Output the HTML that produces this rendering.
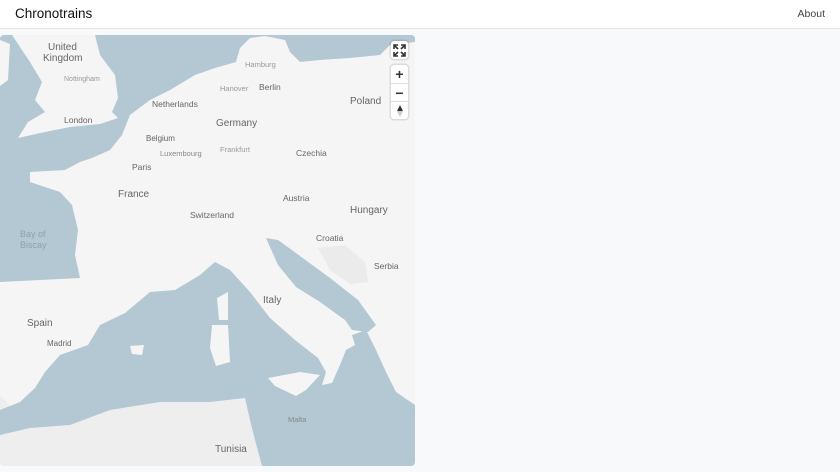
<!DOCTYPE html>
<html><head><meta charset="utf-8"><style>
*{margin:0;padding:0;box-sizing:border-box}
body{width:840px;height:472px;background:#f8f9fa;font-family:"Liberation Sans",sans-serif;overflow:hidden;position:relative}
.hdr{position:absolute;left:0;top:0;width:840px;height:29px;background:#fff;border-bottom:1px solid #e4e6e8}
.brand{position:absolute;left:15px;top:6px;font-size:13.5px;color:#111}
.about{position:absolute;right:15px;top:8px;font-size:10.5px;color:#444}
.map{position:absolute;left:0;top:35px;width:415px;height:431px;border-radius:4px;overflow:hidden;background:#f6f6f6}
.ctl{position:absolute;background:#fff;border-radius:3px;box-shadow:0 0 0 1.5px rgba(0,0,0,.1)}
.btn{width:17px;height:18px;display:flex;align-items:center;justify-content:center;font-size:14px;font-weight:bold;color:#333}
</style></head><body>
<div class="hdr"><div class="brand">Chronotrains</div><div class="about">About</div></div>
<div class="map">
<svg width="415" height="431" viewBox="0 35 415 431" style="position:absolute;left:0;top:0" font-family="Liberation Sans, sans-serif">
<rect x="0" y="35" width="415" height="431" fill="#f5f5f5"/>
<polygon points="318,248 345,245 365,262 368,282 350,284 330,270" fill="#ebebeb"/>
<polygon points="0,395 0,466 262,466 255,440 250,420 245,398 210,402 160,402 110,410 70,425 30,428" fill="#eeeeee"/>
<g fill="#b3c8d2">
<polygon points="0,35 415,35 415,42 390,45 380,55 350,58 320,60 300,62 290,52 285,40 265,36 250,38 240,48 236,62 215,68 195,75 170,90 150,100 130,115 122,135 110,150 92,158 80,162 65,170 30,172 30,182 60,192 72,205 78,230 75,255 80,278 40,280 0,282"/>
<polygon points="0,410 20,402 35,388 45,372 60,355 88,345 100,325 125,313 150,292 175,290 200,275 215,262 230,270 250,292 270,318 295,340 318,358 326,372 322,385 332,383 340,365 346,350 355,345 352,335 366,330 376,350 386,372 396,392 415,405 415,466 262,466 255,440 250,420 245,398 210,402 160,402 110,410 70,425 30,428 0,435"/>
<polygon points="266,238 278,240 300,256 330,278 358,300 376,325 368,332 352,330 345,320 320,302 296,287 278,265"/>
</g>
<g fill="#f5f5f5">
<polygon points="12,35 95,35 100,55 115,75 118,98 112,112 118,118 100,124 70,127 45,132 18,138 28,122 45,112 35,100 42,82 30,62"/>
<polygon points="0,40 10,44 8,80 0,86"/>
<polygon points="268,378 300,372 320,375 306,390 296,396 275,386"/>
<polygon points="212,325 228,325 230,362 216,366 210,348"/>
<polygon points="217,298 228,292 228,320 219,320"/>
<polygon points="130,346 144,345 142,355 132,354"/>
</g>
<g fill="#666" font-size="8">
<text x="48" y="50" font-size="10">United</text><text x="43" y="61" font-size="10">Kingdom</text>
<text x="64" y="81" fill="#999" font-size="7">Nottingham</text>
<text x="64" y="123" font-size="8.5">London</text>
<text x="152" y="107" font-size="8.5">Netherlands</text>
<text x="245" y="67" fill="#999" font-size="7.5">Hamburg</text>
<text x="259" y="90" font-size="8.5">Berlin</text>
<text x="220" y="91" fill="#999" font-size="7.5">Hanover</text>
<text x="216" y="126" font-size="10">Germany</text>
<text x="350" y="104" font-size="10">Poland</text>
<text x="146" y="141" font-size="8">Belgium</text>
<text x="160" y="156" fill="#888" font-size="7.5">Luxembourg</text>
<text x="220" y="152" fill="#999" font-size="7.5">Frankfurt</text>
<text x="296" y="156" font-size="8.5">Czechia</text>
<text x="132" y="170" font-size="8.5">Paris</text>
<text x="118" y="197" font-size="10">France</text>
<text x="283" y="201" font-size="8.5">Austria</text>
<text x="350" y="213" font-size="10">Hungary</text>
<text x="190" y="218" font-size="8.5">Switzerland</text>
<text x="20" y="237" fill="#8aa3ae" font-size="9">Bay of</text>
<text x="20" y="248" fill="#8aa3ae" font-size="9">Biscay</text>
<text x="316" y="241" font-size="8.5">Croatia</text>
<text x="374" y="269" font-size="8.5">Serbia</text>
<text x="263" y="303" font-size="10">Italy</text>
<text x="27" y="326" font-size="10">Spain</text>
<text x="47" y="346" font-size="8">Madrid</text>
<text x="215" y="452" font-size="10">Tunisia</text>
<text x="288" y="422" fill="#888" font-size="7.5">Malta</text>
</g>
</svg>
<div class="ctl" style="left:391px;top:6px"><div class="btn"><svg width="13" height="13" viewBox="0 0 13 13" fill="none" stroke="#333" stroke-width="1.6"><path d="M1 5V1h4M1 1l4 4M12 5V1H8M12 1L8 5M1 8v4h4M1 12l4-4M12 8v4H8M12 12L8 8"/></svg></div></div>
<div class="ctl" style="left:391px;top:30px"><div class="btn">+</div><div class="btn" style="border-top:1px solid #ddd">−</div><div class="btn" style="border-top:1px solid #ddd"><svg width="8" height="12" viewBox="0 0 8 12"><path d="M4 0L7 6H1z" fill="#333"/><path d="M4 12L7 6H1z" fill="#ccc"/></svg></div></div>
</div>
</body></html>
